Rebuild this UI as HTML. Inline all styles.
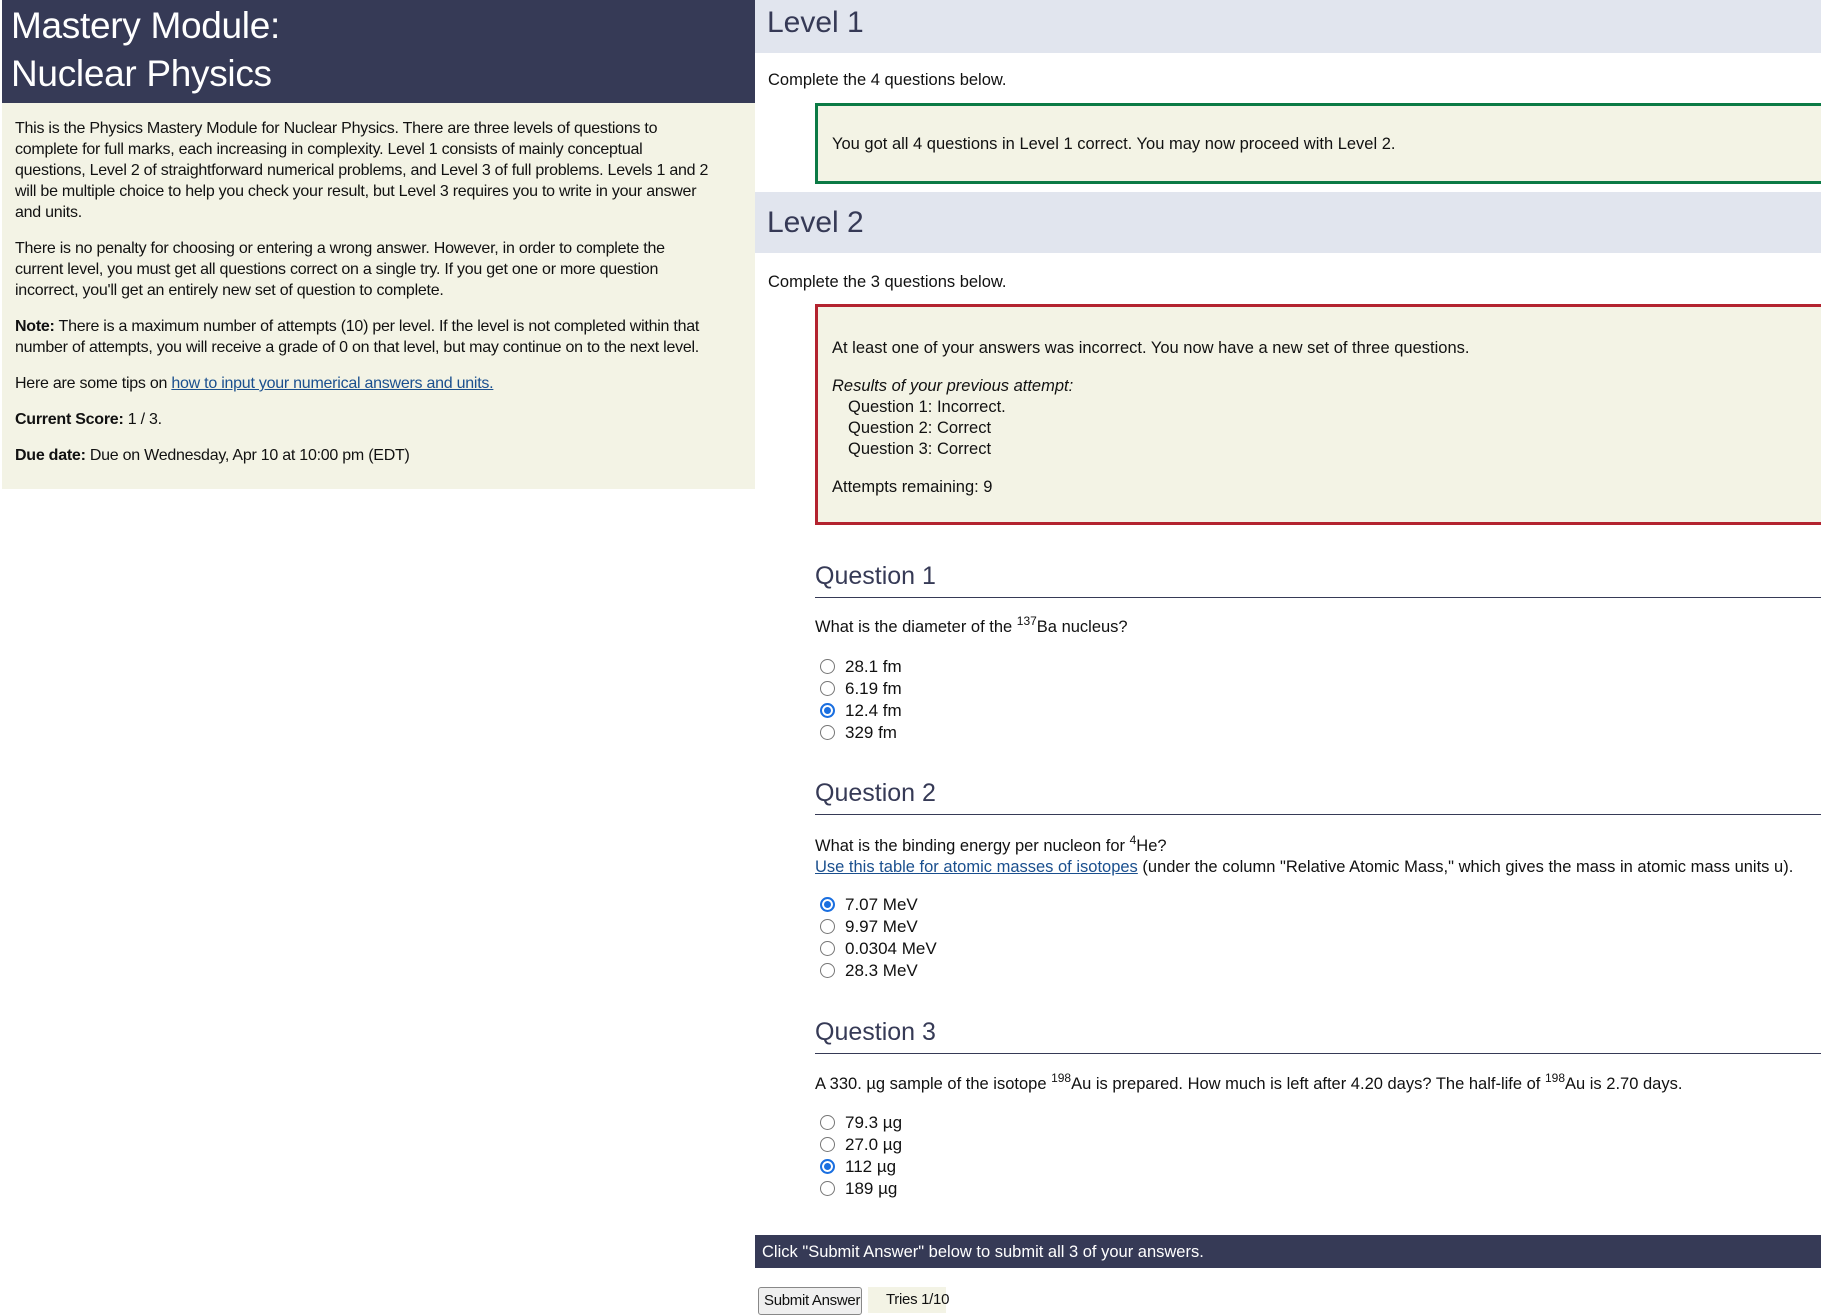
<!DOCTYPE html>
<html><head><meta charset="utf-8"><style>
*{margin:0;padding:0;box-sizing:border-box}
body{width:1821px;height:1311px;overflow:hidden;background:#fff;font-family:"Liberation Sans",Arial,sans-serif;font-size:16.5px;color:#111;position:relative}
.abs{position:absolute}
.hdr{left:2px;top:0;width:753px;height:103px;background:#363a56;color:#fff;font-size:37px;line-height:48px;padding:2px 0 0 9px;letter-spacing:-0.3px}
.lp{left:2px;top:103px;width:753px;height:386px;background:#f3f3e5;padding:15px 38px 15px 13px;line-height:21px;font-size:16px;letter-spacing:-0.25px}
.lp p{margin-bottom:15px}
a{color:#1a4f8e}
.band{left:755px;width:1066px;background:#e1e5ee;color:#363a56;font-size:30px;padding-left:12px}
.box{left:815px;width:1020px;background:#f3f3e5;border:3px solid}
.qh{left:815px;width:1006px;font-size:25px;color:#363a56;border-bottom:1.5px solid #363a56;height:36px}
.opt{left:820px;line-height:22px;font-size:17px}
.r{display:inline-block;width:15px;height:15px;border:1.5px solid #767676;border-radius:50%;vertical-align:-2px;margin-right:10px;background:#fff}
.r.on{border:2px solid #1a6fe0;box-shadow:inset 0 0 0 2px #fff;background:#1a6fe0}
sup{font-size:12px;vertical-align:7px;line-height:0}
</style></head><body>
<div class="abs hdr">Mastery Module:<br>Nuclear Physics</div>
<div class="abs lp">
<p>This is the Physics Mastery Module for Nuclear Physics. There are three levels of questions to complete for full marks, each increasing in complexity. Level 1 consists of mainly conceptual questions, Level 2 of straightforward numerical problems, and Level 3 of full problems. Levels 1 and 2 will be multiple choice to help you check your result, but Level 3 requires you to write in your answer and units.</p>
<p>There is no penalty for choosing or entering a wrong answer. However, in order to complete the<br>current level, you must get all questions correct on a single try. If you get one or more question<br>incorrect, you'll get an entirely new set of question to complete.</p>
<p><b>Note:</b> There is a maximum number of attempts (10) per level. If the level is not completed within that number of attempts, you will receive a grade of 0 on that level, but may continue on to the next level.</p>
<p>Here are some tips on <a href="#">how to input your numerical answers and units.</a></p>
<p><b>Current Score:</b> 1 / 3.</p>
<p><b>Due date:</b> Due on Wednesday, Apr 10 at 10:00 pm (EDT)</p>
</div>

<div class="abs band" style="top:0;height:53px;line-height:46px">Level 1</div>
<div class="abs" style="left:768px;top:71px">Complete the 4 questions below.</div>
<div class="abs box" style="top:103px;height:81px;border-color:#0b7a45;padding:29px 0 0 14px">You got all 4 questions in Level 1 correct. You may now proceed with Level 2.</div>

<div class="abs band" style="top:192px;height:61px;line-height:62px">Level 2</div>
<div class="abs" style="left:768px;top:273px">Complete the 3 questions below.</div>
<div class="abs box" style="top:304px;height:221px;border-color:#b3232f;padding:31px 0 0 14px;line-height:21px">
At least one of your answers was incorrect. You now have a new set of three questions.
<div style="margin-top:17px;font-style:italic">Results of your previous attempt:</div>
<div style="padding-left:16px">Question 1: Incorrect.<br>Question 2: Correct<br>Question 3: Correct</div>
<div style="margin-top:17px">Attempts remaining: 9</div>
</div>

<div class="abs qh" style="top:562px">Question 1</div>
<div class="abs" style="left:815px;top:618px">What is the diameter of the <sup>137</sup>Ba nucleus?</div>
<div class="abs opt" style="top:656px"><span class="r"></span>28.1 fm<br><span class="r"></span>6.19 fm<br><span class="r on"></span>12.4 fm<br><span class="r"></span>329 fm</div>

<div class="abs qh" style="top:779px">Question 2</div>
<div class="abs" style="left:815px;top:836px;line-height:21px">What is the binding energy per nucleon for <sup>4</sup>He?<br><a href="#">Use this table for atomic masses of isotopes</a> (under the column "Relative Atomic Mass," which gives the mass in atomic mass units u).</div>
<div class="abs opt" style="top:894px"><span class="r on"></span>7.07 MeV<br><span class="r"></span>9.97 MeV<br><span class="r"></span>0.0304 MeV<br><span class="r"></span>28.3 MeV</div>

<div class="abs qh" style="top:1018px">Question 3</div>
<div class="abs" style="left:815px;top:1075px">A 330. µg sample of the isotope <sup>198</sup>Au is prepared. How much is left after 4.20 days? The half-life of <sup>198</sup>Au is 2.70 days.</div>
<div class="abs opt" style="top:1112px"><span class="r"></span>79.3 µg<br><span class="r"></span>27.0 µg<br><span class="r on"></span>112 µg<br><span class="r"></span>189 µg</div>

<div class="abs" style="left:755px;top:1235px;width:1066px;height:33px;background:#363a56;color:#fff;padding:8px 0 0 7px">Click "Submit Answer" below to submit all 3 of your answers.</div>
<div class="abs" style="left:758px;top:1287px;width:104px;height:28px;border:1px solid #888;border-radius:3px;background:#efefef;padding:4px 0 0 5px;white-space:nowrap;font-size:15px;letter-spacing:-0.3px">Submit Answer</div>
<div class="abs" style="left:868px;top:1287px;width:78px;height:26px;background:#f3f3e5"></div>
<div class="abs" style="left:886px;top:1291px;white-space:nowrap;font-size:15px;letter-spacing:-0.3px">Tries 1/10</div>
</body></html>
